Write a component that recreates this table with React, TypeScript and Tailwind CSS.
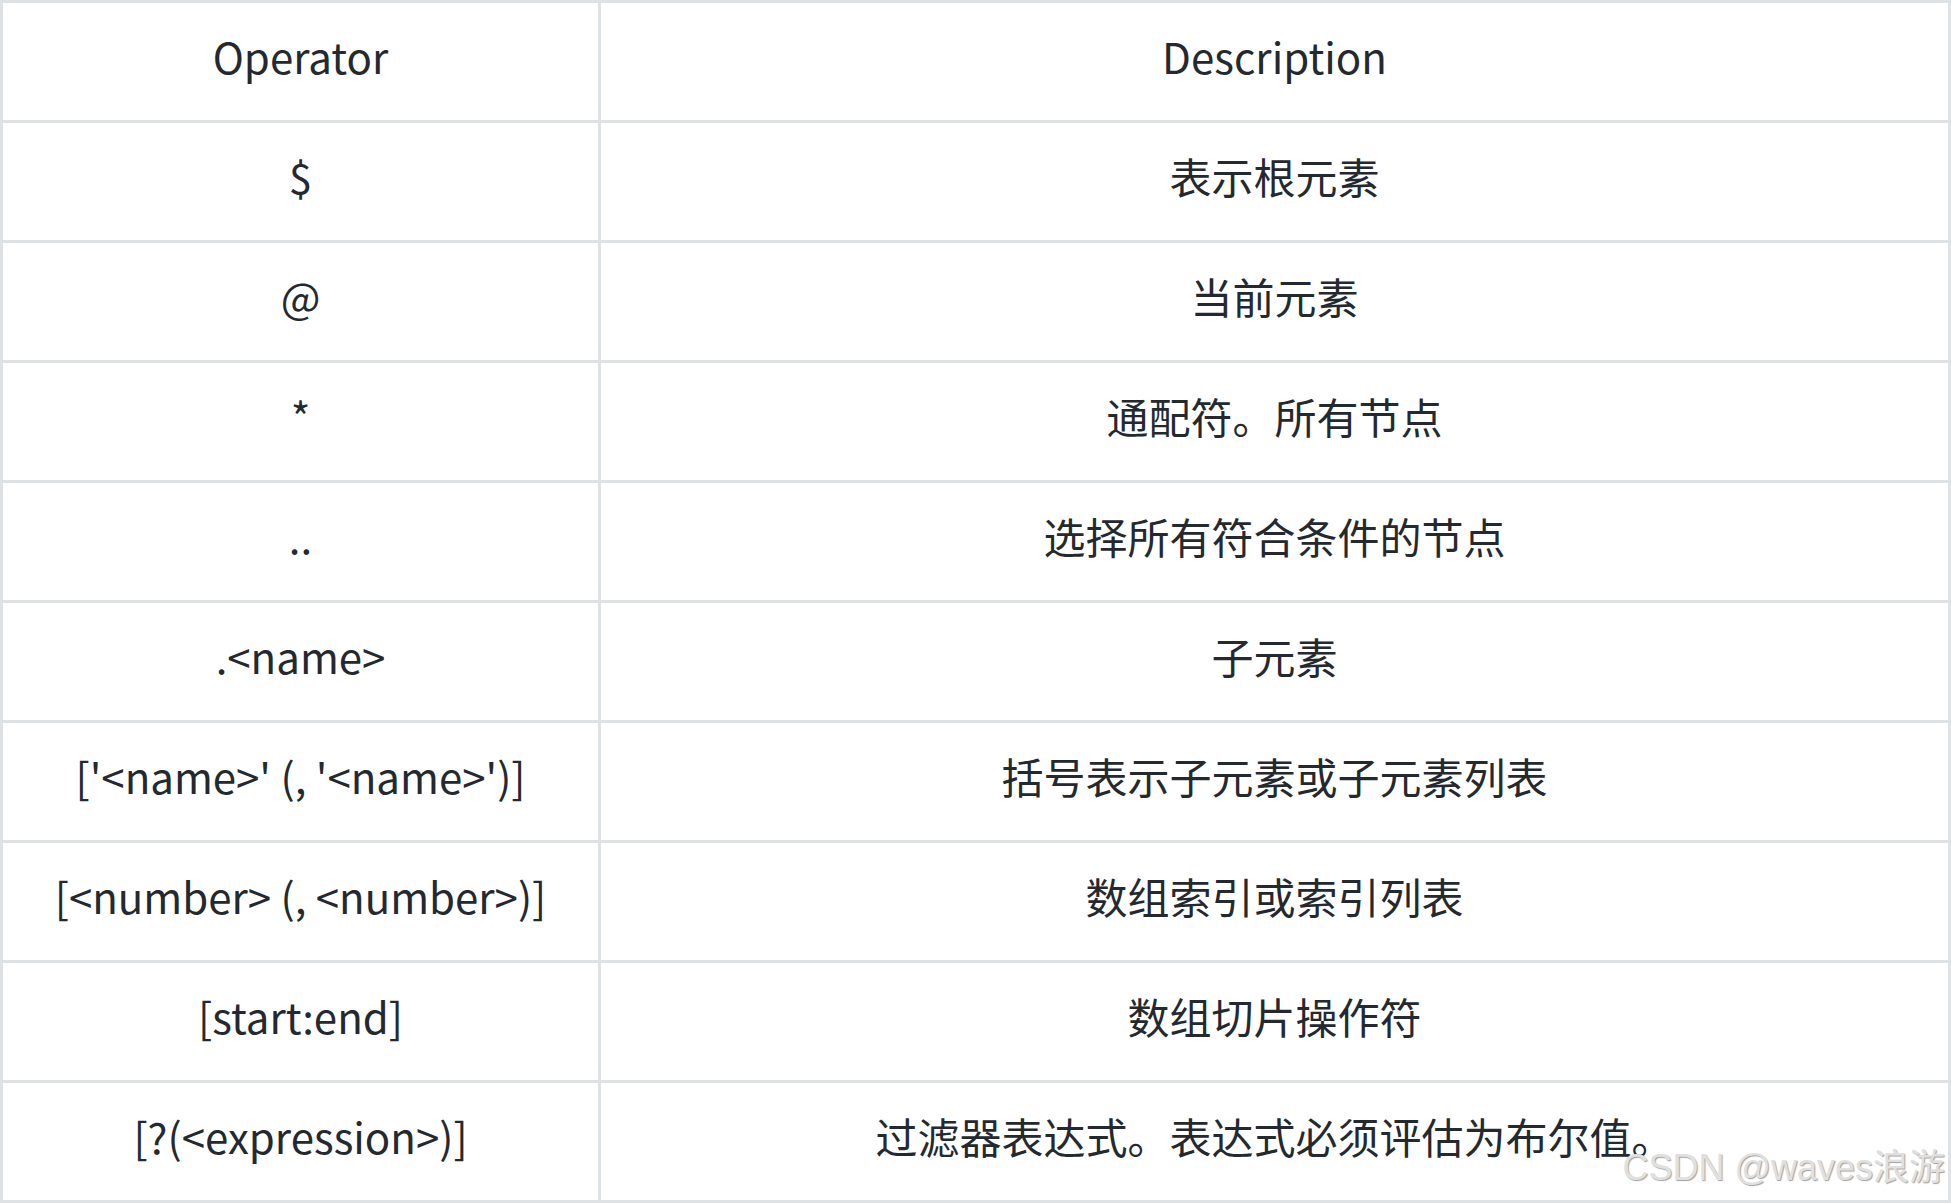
import React from "react";

const rows: [string, string][] = [
  ["$", "表示根元素"],
  ["@", "当前元素"],
  ["*", "通配符。所有节点"],
  ["..", "选择所有符合条件的节点"],
  [".<name>", "子元素"],
  ["['<name>' (, '<name>')]", "括号表示子元素或子元素列表"],
  ["[<number> (, <number>)]", "数组索引或索引列表"],
  ["[start:end]", "数组切片操作符"],
  ["[?(<expression>)]", "过滤器表达式。表达式必须评估为布尔值。"],
];

export default function App() {
  return (
    <div className="relative w-[1951px] h-[1203px] overflow-hidden bg-white">
      <table
        className="w-[1951px] border-collapse text-[#24292f] text-[42px] text-center"
        style={{ fontFamily: '"Noto Sans CJK SC", "Noto Sans", sans-serif' }}
      >
        <thead>
          <tr>
            <th className="h-[120px] w-[598px] border-[3px] border-[#dfe2e5] font-normal p-0 pb-[12px]">Operator</th>
            <th className="h-[120px] border-[3px] border-[#dfe2e5] font-normal p-0 pb-[12px]">Description</th>
          </tr>
        </thead>
        <tbody>
          {rows.map(([op, desc]) => (
            <tr key={op}>
              <td className="h-[120px] border-[3px] border-[#dfe2e5] p-0 pb-[12px]">{op}</td>
              <td className="h-[120px] border-[3px] border-[#dfe2e5] p-0 pb-[12px]">{desc}</td>
            </tr>
          ))}
        </tbody>
      </table>
      <div
        className="absolute right-[6px] bottom-[17px] text-[36px] leading-none text-[#e0e0e0] [text-shadow:1px_1px_1px_#a0a0a0]"
        style={{ fontFamily: '"Liberation Sans", "Noto Sans CJK SC", sans-serif' }}
      >
        CSDN @waves浪游
      </div>
    </div>
  );
}
